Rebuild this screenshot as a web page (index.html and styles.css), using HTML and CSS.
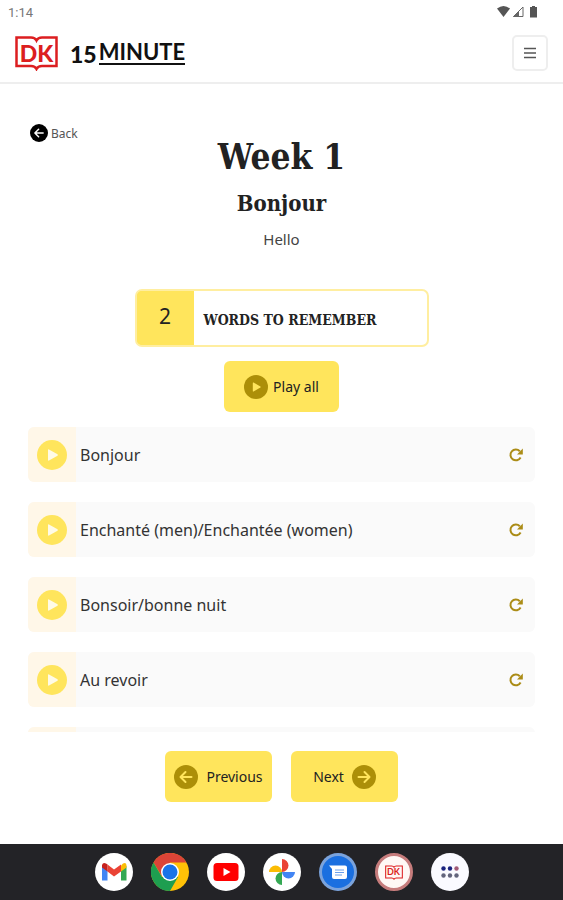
FILE: index.html
```html
<!DOCTYPE html>
<html lang="en">
<head>
  <meta charset="UTF-8" />
  <meta name="viewport" content="width=device-width, initial-scale=1" />
  <title>DK 15 Minute - Week 1</title>
  <link rel="stylesheet" href="styles.css">
</head>
<body>

<!-- shared icons -->
<svg class="sprite" aria-hidden="true">
  <symbol id="play" viewBox="0 0 30 30">
    <circle cx="15" cy="15" r="15" fill="currentColor"/>
    <path class="mark" d="M11 10v10q0 1 1 .5l8.500-4.800q.8-.7 0-1.400l-8.500-4.800q-1-.5-1 .5z"/>
  </symbol>
  <symbol id="left" viewBox="0 0 24 24">
    <circle cx="12" cy="12" r="12" fill="currentColor"/>
    <path class="line" d="M17.500 12H7M11.500 7 6.500 12l5 5"/>
  </symbol>
  <symbol id="right" viewBox="0 0 24 24">
    <circle cx="12" cy="12" r="12" fill="currentColor"/>
    <path class="line" d="M6.500 12h10.500M12.500 7l5 5-5 5"/>
  </symbol>
  <symbol id="redo" viewBox="0 0 14 14">
    <path d="M11.600 9.500A5.400 5.400 0 1 1 10.800 3.200" fill="none" stroke="currentColor" stroke-width="2"/>
    <path d="M13.800.6v5.800H8z" fill="currentColor"/>
  </symbol>
  <symbol id="book" viewBox="0 0 43 36">
    <path d="M1.500 2.500H16Q20 2.500 21.500 5.500 23 2.500 27 2.500H41.500V31H27Q23 31 21.500 34 20 31 16 31H1.500Z" fill="none" stroke="currentColor" stroke-width="2.500"/>
  </symbol>
</svg>

<div class="statusbar">
  <span>1:14</span>
  <svg width="42" height="14" viewBox="0 0 42 14" aria-hidden="true">
    <path d="M0 3.500Q6.500-1.500 13 3.500L6.500 12Z" fill="#555"/>
    <path d="M26 2v9.500H16.500Z" fill="none" stroke="#666"/>
    <path d="M22 6v6h-6z" fill="#666"/>
    <path d="M35 1h3v1h2v10.500h-7V2h2z" fill="#555"/>
  </svg>
</div>

<header>
  <a class="brand" href="#">
    <span class="dk"><svg aria-hidden="true"><use href="#book"/></svg><b>DK</b></span>
    <span class="fifteen">15</span>
    <span class="minute">MINUTE</span>
  </a>
  <button class="menu" aria-label="Menu">
    <svg width="14" height="12" viewBox="0 0 14 12"><path d="M1 1.500h12M1 6h12M1 10.500h12" stroke="#555" stroke-width="1.500"/></svg>
  </button>
</header>

<main>
  <a class="back" href="#"><svg aria-hidden="true"><use href="#left"/></svg>Back</a>
  <div class="titles">
    <h1>Week 1</h1>
    <h2>Bonjour</h2>
    <p>Hello</p>
  </div>

  <div class="section">
    <div class="number">2</div>
    <h3>WORDS TO REMEMBER</h3>
  </div>
  <button class="btn play-all"><svg aria-hidden="true"><use href="#play"/></svg>Play all</button>

  <ul class="words">
    <li>
      <button class="play" aria-label="Play Bonjour"><svg><use href="#play"/></svg></button>
      <span>Bonjour</span>
      <button class="redo" aria-label="Repeat Bonjour"><svg><use href="#redo"/></svg></button>
    </li>
    <li>
      <button class="play" aria-label="Play Enchanté"><svg><use href="#play"/></svg></button>
      <span>Enchanté (men)/Enchantée (women)</span>
      <button class="redo" aria-label="Repeat Enchanté"><svg><use href="#redo"/></svg></button>
    </li>
    <li>
      <button class="play" aria-label="Play Bonsoir"><svg><use href="#play"/></svg></button>
      <span>Bonsoir/bonne nuit</span>
      <button class="redo" aria-label="Repeat Bonsoir"><svg><use href="#redo"/></svg></button>
    </li>
    <li>
      <button class="play" aria-label="Play Au revoir"><svg><use href="#play"/></svg></button>
      <span>Au revoir</span>
      <button class="redo" aria-label="Repeat Au revoir"><svg><use href="#redo"/></svg></button>
    </li>
    <li>
      <button class="play" aria-label="Play"><svg><use href="#play"/></svg></button>
    </li>
  </ul>

  <div class="pager">
    <button class="btn"><svg aria-hidden="true"><use href="#left"/></svg>Previous</button>
    <button class="btn">Next<svg aria-hidden="true"><use href="#right"/></svg></button>
  </div>
</main>

<nav class="dock">
  <a href="#" aria-label="Gmail">
    <svg viewBox="0 0 38 38">
      <circle cx="19" cy="19" r="19" fill="#fff"/>
      <path d="M7 13v14.500h5.500V17z" fill="#4285f4"/>
      <path d="M26 17v10.500h5.500V13z" fill="#34a853"/>
      <path d="M26 12.500V18.500L31.500 14.500V12Q31 9 28 10.500z" fill="#fbbc04"/>
      <path d="M12.500 11.500 19 16.500 26 11.500V18.500L19 23.500 12.500 18.500z" fill="#ea4335"/>
      <path d="M7 12Q8 9 11 10.500L12.500 11.500V18.500L7 14.500z" fill="#c5221f"/>
    </svg>
  </a>
  <a href="#" aria-label="Chrome">
    <svg viewBox="0 0 38 38">
      <circle cx="19" cy="19" r="19" fill="#ffc107"/>
      <path d="M2.500 9.500A19 19 0 0 1 35.500 9.500H19L11 23.500z" fill="#db4437"/>
      <path d="M2.500 9.500A19 19 0 0 0 19 38L27 24H11z" fill="#1e9e50"/>
      <circle cx="19" cy="19" r="9" fill="#fff"/>
      <circle cx="19" cy="19" r="7.500" fill="#1a73e8"/>
    </svg>
  </a>
  <a href="#" aria-label="YouTube">
    <svg viewBox="0 0 38 38">
      <circle cx="19" cy="19" r="19" fill="#fff"/>
      <rect x="6.500" y="10" width="25" height="18" rx="3.500" fill="#f00"/>
      <path d="M16.500 15v8l7-4z" fill="#fff"/>
    </svg>
  </a>
  <a href="#" aria-label="Photos">
    <svg viewBox="0 0 38 38">
      <circle cx="19" cy="19" r="19" fill="#fff"/>
      <path d="M19 19H6A6.500 6.500 0 0 1 19 19z" fill="#fbbc04"/>
      <path d="M19 19V6A6.500 6.500 0 0 1 19 19z" fill="#ea4335"/>
      <path d="M19 19H32A6.500 6.500 0 0 1 19 19z" fill="#4285f4"/>
      <path d="M19 19V32A6.500 6.500 0 0 1 19 19z" fill="#34a853"/>
    </svg>
  </a>
  <a href="#" aria-label="Messages">
    <svg viewBox="0 0 38 38">
      <circle cx="19" cy="19" r="19" fill="#7ba3dc"/>
      <circle cx="19" cy="19" r="16" fill="#1a6fe0"/>
      <path d="M10 12.500H26q2 0 2 2V24q0 2-2 2H15q-2 0-2-2V16z" fill="#fff"/>
      <path d="M16 17h9M16 19.500h9M16 22h7" stroke="#6ba0ec"/>
    </svg>
  </a>
  <a class="dk-app" href="#" aria-label="DK 15 Minute"><span class="dk small"><svg aria-hidden="true"><use href="#book"/></svg><b>DK</b></span></a>
  <a href="#" aria-label="All apps">
    <svg viewBox="0 0 38 38">
      <circle cx="19" cy="19" r="19" fill="#fafaff"/>
      <g fill="#1a237e"><circle cx="12.500" cy="15.500" r="2.200"/><circle cx="19" cy="15.500" r="2.200"/></g>
      <circle cx="25.500" cy="15.500" r="2.200" fill="#a25a76"/>
      <g fill="#62647c"><circle cx="12.500" cy="22.500" r="2.200"/><circle cx="19" cy="22.500" r="2.200"/><circle cx="25.500" cy="22.500" r="2.200"/></g>
    </svg>
  </a>
</nav>

</body>
</html>
```
FILE: styles.css
```css
* { box-sizing: border-box; }
body { margin: 0; height: 100vh; display: flex; flex-direction: column; background: #fff; color: #222; font-family: "Noto Sans", sans-serif; font-size: 16px; }
button { font: inherit; color: inherit; border: 0; padding: 0; background: none; cursor: pointer; }
a { color: inherit; text-decoration: none; }
svg { display: block; flex: none; }
h1, h2, h3, p, ul { margin: 0; padding: 0; }
h1, h2, h3 { font-family: "DejaVu Serif Condensed", "DejaVu Serif", serif; font-weight: bold; }
.sprite { position: absolute; width: 0; height: 0; }
.mark { fill: var(--mark, #fffbe6); }
.line { fill: none; stroke: var(--mark, #ffe55c); stroke-width: 2; stroke-linecap: round; stroke-linejoin: round; }

.statusbar { height: 24px; flex: none; display: flex; justify-content: space-between; align-items: center; padding: 0 24px 0 8px; font-family: Roboto, sans-serif; font-size: 13px; color: #777; }

header { height: 60px; flex: none; display: flex; justify-content: space-between; align-items: center; padding: 0 15px; border-bottom: 2px solid #eee; }
.brand { display: flex; align-items: center; color: #111; font-family: Lato, sans-serif; font-weight: 900; }
.dk { display: grid; place-items: center; width: 43px; height: 36px; color: #dc1e20; font-family: Lato, sans-serif; font-size: 23px; line-height: 24px; }
.dk > * { grid-area: 1 / 1; }
.dk svg { width: 100%; height: 100%; }
.fifteen { margin: 2px 2px 0 12px; font-size: 23px; line-height: 28px; }
.minute { font-size: 22px; line-height: 22px; font-weight: bold; border-bottom: 2px solid #111; }
.menu { display: grid; place-items: center; width: 36px; height: 36px; border: 2px solid #eee; border-radius: 5px; }

main { flex: 1; min-height: 0; display: flex; flex-direction: column; align-items: center; padding: 39px 28px 42px; }
.back { align-self: flex-start; display: flex; align-items: center; gap: 3px; height: 20px; padding-left: 2px; font-size: 12px; color: #555; --mark: #fff; }
.back svg { width: 18px; height: 18px; color: #000; }
.titles { text-align: center; margin-bottom: 38px; }
h1 { font-size: 35px; line-height: 44px; margin-top: -8px; }
h2 { font-size: 22px; line-height: 32px; margin: 8px 0; }
.titles p { font-size: 15px; line-height: 24px; color: #444; }

.section { display: flex; flex: none; width: 294px; height: 58px; border: 2px solid #ffeea0; border-radius: 7px; overflow: hidden; background: linear-gradient(to right, #ffe55c 57px, #fff 57px) border-box; }
.number { width: 57px; padding-bottom: 4px; display: grid; place-items: center; background: #ffe55c; font-size: 21px; }
h3 { font-size: 14px; line-height: 58px; padding-left: 10px; }
.btn { display: flex; flex: none; align-items: center; justify-content: center; gap: 8px; width: 107px; height: 51px; border-radius: 6px; background: #ffe55c; font-size: 14px; }
.btn svg { width: 24px; height: 24px; color: #ac8f08; }
.play-all { width: 115px; gap: 5px; margin: 14px 0 15px; --mark: #ffe55c; }

.words { flex: 1; min-height: 0; width: 100%; overflow: hidden; list-style: none; }
.words li { display: flex; align-items: center; height: 55px; margin-bottom: 20px; border-radius: 6px; background: #fafafa; overflow: hidden; }
.words span { flex: 1; padding-left: 4px; color: #333; }
.play { display: grid; place-items: center; width: 48px; height: 55px; background: #fff7e8; color: #ffe55c; }
.play svg { width: 30px; height: 30px; }
.redo { margin-right: 12px; color: #ab8c16; }
.redo svg { width: 14px; height: 14px; }

.pager { display: flex; gap: 19px; padding-top: 19px; }

.dock { height: 56px; flex: none; display: flex; justify-content: center; align-items: center; gap: 18px; background: #232327; }
.dock > a, .dock > a > svg { width: 38px; height: 38px; }
.dock .dk-app { display: grid; place-items: center; border: 3px solid #c67c7c; border-radius: 50%; background: #fff8f5; }
.small { width: 18px; height: 15px; font-size: 9px; line-height: 10px; }
```
